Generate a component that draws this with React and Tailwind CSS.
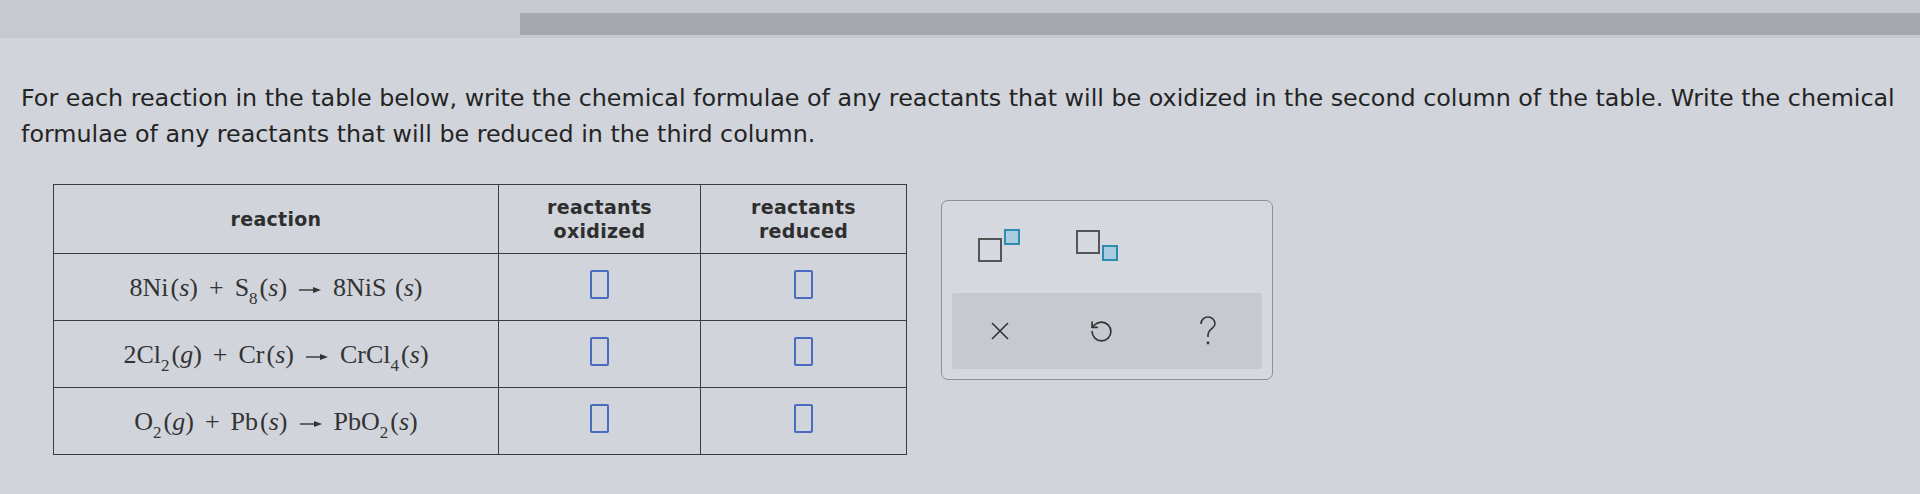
import { RotateCcw } from "lucide-react";

function Box() {
    return <span className="inline-block w-[19px] h-[29px] border-2 border-[#4a6cc0] rounded-[2px]"></span>;
}

function Arrow() {
    return (
        <svg width="22" height="8" viewBox="0 0 22 8" className="inline-block mx-[12px] align-middle">
            <path d="M0 4 L15 4" stroke="#333" strokeWidth="1.4" />
            <path d="M14 1 L22 4 L14 7 Z" fill="#333" />
        </svg>
    );
}

function Plus() {
    return <span className="mx-[11px]">+</span>;
}

function Sub(props) {
    return <sub className="text-[17px] relative top-[8px] align-baseline">{props.children}</sub>;
}

function State(props) {
    return <span className="ml-[2px]">(<i>{props.s}</i>)</span>;
}

const rows = [
    <>8Ni<State s="s" /><Plus />S<Sub>8</Sub><State s="s" /><Arrow />8NiS <State s="s" /></>,
    <>2Cl<Sub>2</Sub><State s="g" /><Plus />Cr<State s="s" /><Arrow />CrCl<Sub>4</Sub><State s="s" /></>,
    <>O<Sub>2</Sub><State s="g" /><Plus />Pb<State s="s" /><Arrow />PbO<Sub>2</Sub><State s="s" /></>,
];

function SuperIcon() {
    return (
        <svg width="44" height="36" viewBox="0 0 44 36">
            <rect x="1" y="10" width="22" height="22" fill="none" stroke="#555" strokeWidth="2" />
            <rect x="27" y="1" width="14" height="14" fill="#a9cde0" stroke="#2e8cb0" strokeWidth="2" />
        </svg>
    );
}

function SubIcon() {
    return (
        <svg width="44" height="36" viewBox="0 0 44 36">
            <rect x="1" y="2" width="22" height="22" fill="none" stroke="#555" strokeWidth="2" />
            <rect x="27" y="17" width="14" height="14" fill="#a9cde0" stroke="#2e8cb0" strokeWidth="2" />
        </svg>
    );
}

export default function App() {
    return (
        <div className="w-[1920px] h-[494px] bg-[#d1d4db] flex flex-col overflow-hidden">
            <div className="h-[38px] bg-[#c6c9cf] pl-[520px] pt-[13px]">
                <div className="h-[22px] bg-[#a6a8ad]"></div>
            </div>
            <p className="mt-[42px] px-[21px] text-[23.8px] leading-[36px] text-[#242424] font-['DejaVu_Sans',sans-serif]">
                For each reaction in the table below, write the chemical formulae of any reactants that will be oxidized in the second column of the table. Write the chemical formulae of any reactants that will be reduced in the third column.
            </p>
            <div className="flex items-start mt-[32px] pl-[53px]">
                <table className="border-collapse border border-[#3c3c3c]">
                    <thead>
                        <tr className="h-[69px] font-['DejaVu_Sans',sans-serif] font-semibold text-[19px] leading-[24px] text-[#2e2e2e] tracking-[0.3px]">
                            <th className="w-[445px] border border-[#3c3c3c] font-semibold">reaction</th>
                            <th className="w-[202px] border border-[#3c3c3c] font-semibold">reactants<br />oxidized</th>
                            <th className="w-[206px] border border-[#3c3c3c] font-semibold">reactants<br />reduced</th>
                        </tr>
                    </thead>
                    <tbody>
                        {rows.map((eq, i) => (
                            <tr key={i} className="h-[67px]">
                                <td className="border border-[#3c3c3c] text-center font-['Liberation_Serif',serif] text-[26px] text-[#333]">{eq}</td>
                                <td className="border border-[#3c3c3c] text-center align-middle"><Box /></td>
                                <td className="border border-[#3c3c3c] text-center align-middle"><Box /></td>
                            </tr>
                        ))}
                    </tbody>
                </table>
                <div className="ml-[34px] mt-[16px] w-[332px] h-[180px] border border-[#8e9095] rounded-[7px] bg-[#d5d8de] flex flex-col px-[10px] pb-[10px]">
                    <div className="flex items-center h-[92px] pl-[26px] gap-[54px]">
                        <SuperIcon />
                        <SubIcon />
                    </div>
                    <div className="flex-1 bg-[#c6c9cf] rounded-[3px] flex items-center pl-[38px] gap-[79px]">
                        <svg width="20" height="20" viewBox="0 0 20 20">
                            <path d="M2 2 L18 18 M18 2 L2 18" stroke="#333" strokeWidth="1.6" fill="none" />
                        </svg>
                        <RotateCcw className="w-[25px] h-[25px] text-[#333]" strokeWidth={1.6} />
                        <svg width="20" height="30" viewBox="0 0 20 30" className="ml-[5px]">
                            <path d="M3 8 C3 3 7 1 10 1 C14 1 17 4 17 8 C17 12 10 13 10 19 L10 21" stroke="#333" strokeWidth="1.6" fill="none" />
                            <circle cx="10" cy="27" r="1.4" fill="#333" />
                        </svg>
                    </div>
                </div>
            </div>
        </div>
    );
}
